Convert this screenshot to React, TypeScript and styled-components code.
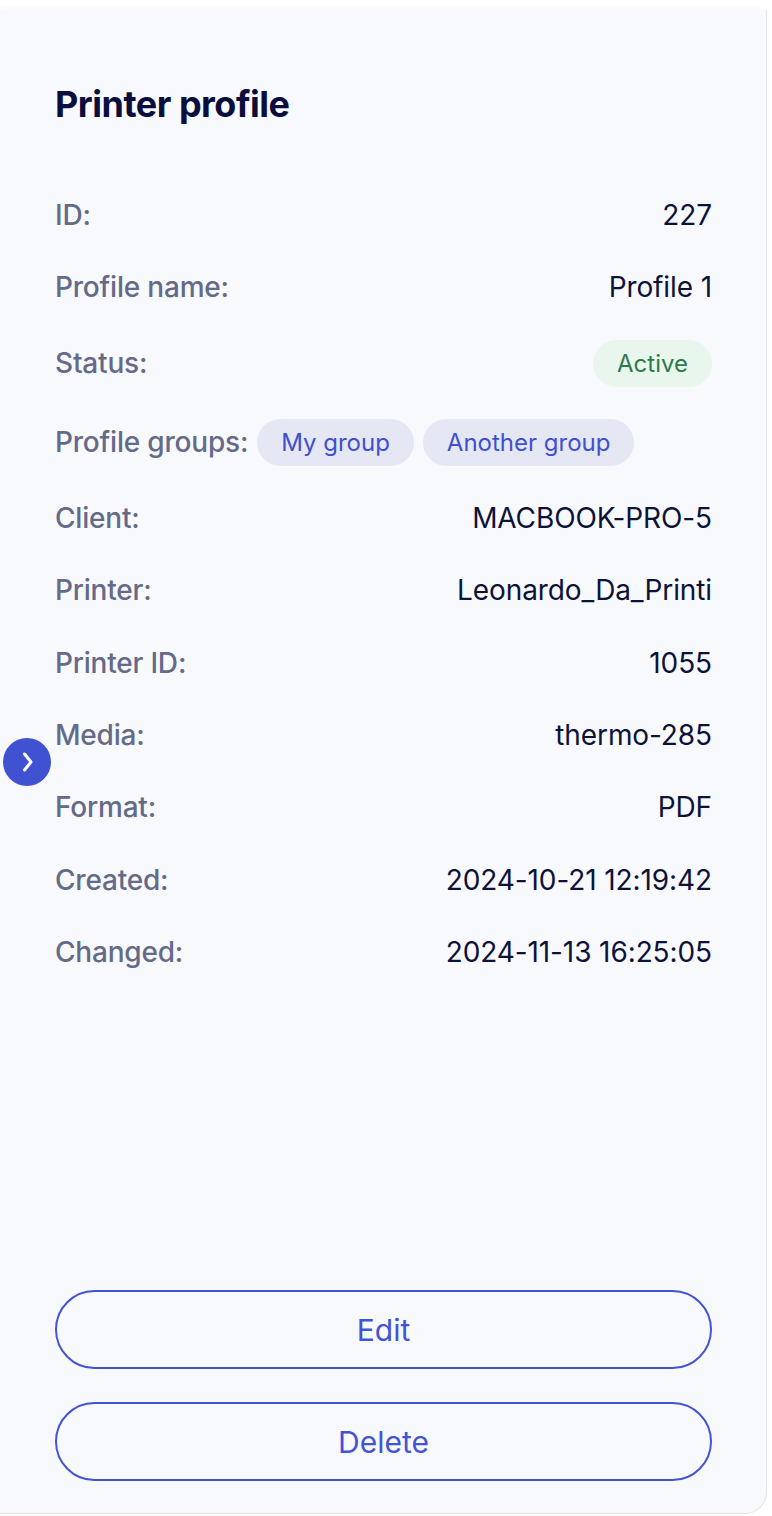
import * as React from 'react';
import styled, { createGlobalStyle } from 'styled-components';

const GlobalStyle = createGlobalStyle`
  body {
    margin: 0;
    background: #ffffff;
    font-family: Inter, "Noto Sans", sans-serif;
  }
`

const Page = styled.div`
  position: relative;
  height: 1516px;
  padding-top: 10px;
  box-sizing: border-box;
`

const Panel = styled.aside`
  width: 767px;
  height: 1504px;
  box-sizing: border-box;
  display: flex;
  flex-direction: column;
  padding: 70px 54px 32px 55px;
  background: #f8f9fd;
  border-right: 1px solid #e2e3e8;
  border-bottom: 1px solid #e2e3e8;
  border-bottom-right-radius: 22px;
  box-shadow: 0 -2px 4px rgba(20, 30, 80, 0.03);
`

const Title = styled.h2`
  margin: 0 0 67px;
  font-size: 36px;
  line-height: 48px;
  font-weight: 700;
  color: #0a0e3c;
  letter-spacing: -0.5px;
`

const DetailList = styled.dl`
  margin: 0;
  display: flex;
  flex-direction: column;
  gap: 32.3px;
`

const Row = styled.div<{ $spread?: boolean }>`
  display: flex;
  align-items: center;
  justify-content: ${p => (p.$spread === false ? 'flex-start' : 'space-between')};
  gap: 9px;
`

const Label = styled.dt`
  font-size: 28px;
  line-height: 40px;
  font-weight: 500;
  color: #646a88;
  letter-spacing: -0.2px;
`

const Value = styled.dd`
  margin: 0;
  font-size: 28px;
  line-height: 40px;
  font-weight: 400;
  color: #0d1238;
  letter-spacing: -0.1px;
`

const Chips = styled.dd`
  margin: 0;
  display: flex;
  gap: 9px;
`

const Chip = styled.span<{ $tone: 'green' | 'blue' }>`
  display: inline-flex;
  align-items: center;
  height: 47px;
  padding: 0 24px;
  border-radius: 24px;
  font-size: 24px;
  font-weight: 400;
  background: ${p => (p.$tone === 'green' ? '#e9f6ed' : '#e5e7f5')};
  color: ${p => (p.$tone === 'green' ? '#2f7a4a' : '#3e4fcf')};
`

const Spacer = styled.div`
  flex: 1;
`

const Actions = styled.div`
  display: flex;
  flex-direction: column;
  gap: 33px;
`

const OutlineButton = styled.button`
  height: 79px;
  box-sizing: border-box;
  border: 2px solid #4353d6;
  border-radius: 40px;
  background: transparent;
  font-family: inherit;
  font-size: 30px;
  font-weight: 400;
  color: #4353d6;
  cursor: pointer;
`

const CollapseButton = styled.button`
  position: absolute;
  left: 3px;
  top: 738px;
  width: 48px;
  height: 48px;
  border-radius: 50%;
  border: none;
  padding: 0;
  display: flex;
  align-items: center;
  justify-content: center;
  background: #4052d2;
  cursor: pointer;
`

const rows: { label: string; value: string }[] = [
  { label: 'Client:', value: 'MACBOOK-PRO-5' },
  { label: 'Printer:', value: 'Leonardo_Da_Printi' },
  { label: 'Printer ID:', value: '1055' },
  { label: 'Media:', value: 'thermo-285' },
  { label: 'Format:', value: 'PDF' },
  { label: 'Created:', value: '2024-10-21 12:19:42' },
  { label: 'Changed:', value: '2024-11-13 16:25:05' },
]

export default function App() {
  return (
    <Page>
      <GlobalStyle />
      <Panel>
        <Title>Printer profile</Title>
        <DetailList>
          <Row>
            <Label>ID:</Label>
            <Value>227</Value>
          </Row>
          <Row>
            <Label>Profile name:</Label>
            <Value>Profile 1</Value>
          </Row>
          <Row>
            <Label>Status:</Label>
            <Chip $tone="green">Active</Chip>
          </Row>
          <Row $spread={false}>
            <Label>Profile groups:</Label>
            <Chips>
              <Chip $tone="blue">My group</Chip>
              <Chip $tone="blue">Another group</Chip>
            </Chips>
          </Row>
          {rows.map(r => (
            <Row key={r.label}>
              <Label>{r.label}</Label>
              <Value>{r.value}</Value>
            </Row>
          ))}
        </DetailList>
        <Spacer />
        <Actions>
          <OutlineButton>Edit</OutlineButton>
          <OutlineButton>Delete</OutlineButton>
        </Actions>
      </Panel>
      <CollapseButton aria-label="Expand">
        <svg width="24" height="24" viewBox="0 0 24 24" fill="none">
          <path d="M9.5 4 L16 12 L9.5 20" stroke="#ffffff" strokeWidth="3" strokeLinecap="round" strokeLinejoin="round" />
        </svg>
      </CollapseButton>
    </Page>
  )
}
